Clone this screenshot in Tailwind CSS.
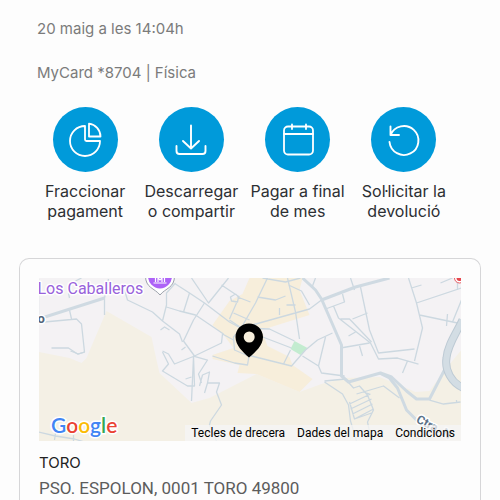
<!DOCTYPE html>
<html lang="ca">
<head>
<meta charset="utf-8">
<meta name="viewport" content="width=device-width, initial-scale=1">
<title>Detall del moviment</title>
<script src="https://cdn.jsdelivr.net/npm/@tailwindcss/browser@4"></script>
</head>
<body class="bg-[#fdfdfd] font-['Inter',sans-serif]">
<main class="flex min-h-screen flex-col pt-[17px]">
  <section class="flex flex-col gap-5 pl-[37px] text-[15px] leading-6 text-[#7b7b7b]">
    <p>20 maig a les 14:04h</p>
    <p>MyCard *8704 | Física</p>
  </section>

  <nav aria-label="Accions" class="mt-[22px] grid grid-cols-4 pr-[43px] pl-8 text-base leading-5 text-[#2c2f33]">
    <button type="button" class="flex flex-col items-center gap-[9px]">
      <span class="flex size-[65px] items-center justify-center rounded-full bg-[#009ada]">
        <svg class="size-9" viewBox="0 0 36 36" fill="none" stroke="#fff" stroke-width="1.8" stroke-linejoin="round" aria-hidden="true"><path d="M18 4A15 15 0 1 0 33 19H19.500Q18 19 18 17.500Z"/><path d="M22 1.700V14.500H33.500A13 13 0 0 0 22 1.700Z"/></svg>
      </span>
      <span>Fraccionar<br>pagament</span>
    </button>
    <button type="button" class="flex flex-col items-center gap-[9px]">
      <span class="flex size-[65px] items-center justify-center rounded-full bg-[#009ada]">
        <svg class="size-9" viewBox="0 0 36 36" fill="none" stroke="#fff" stroke-width="1.900" stroke-linecap="round" stroke-linejoin="round" aria-hidden="true"><path d="M18 3.500V26M10 19L18 26.500L26 19M3.500 24V29Q3.500 32 6.500 32H29.500Q32.500 32 32.500 29V24"/></svg>
      </span>
      <span>Descarregar<br>o compartir</span>
    </button>
    <button type="button" class="flex flex-col items-center gap-[9px]">
      <span class="flex size-[65px] items-center justify-center rounded-full bg-[#009ada]">
        <svg class="size-9" viewBox="0 0 36 36" fill="none" stroke="#fff" stroke-width="1.800" stroke-linecap="round" aria-hidden="true"><rect x="4" y="4.500" width="29" height="28" rx="4"/><path d="M4 12H33M12 2.500V7M26 2.500V7"/></svg>
      </span>
      <span>Pagar a final<br>de mes</span>
    </button>
    <button type="button" class="flex flex-col items-center gap-[9px]">
      <span class="flex size-[65px] items-center justify-center rounded-full bg-[#009ada]">
        <svg class="size-9" viewBox="0 0 36 36" fill="none" stroke="#fff" stroke-width="1.900" stroke-linecap="round" stroke-linejoin="round" aria-hidden="true"><path d="M4.500 4.500V13H13M4.500 13A14.500 14.500 0 1 1 3.500 20"/></svg>
      </span>
      <span>Sol·licitar la<br>devolució</span>
    </button>
  </nav>

  <section class="mx-[19px] mt-[37px] flex-1 rounded-t-[10px] border border-b-0 border-[#d6d6d8] px-[19px] pt-[19px]">
    <div class="relative h-[163px] overflow-hidden bg-[#f4f2f4]">
      <svg class="absolute inset-0 size-full" viewBox="39 278 423 163" preserveAspectRatio="xMidYMid slice" role="img" aria-label="Mapa de Toro">
        <g fill="#f4f0e5">
          <path d="M39 352L70 358L82 363L87 358L107 311L152 337L157 360L160 373L192 403L210 398L257 374L300 392L322 384L345 378L380 377L402 386L416 392L430 391L447 368L462 350V441H39Z"/>
        </g>
        <g fill="#f7eedb">
          <path d="M250 278H303L300 290L310 315L262 330L268 346L290 357L293 365L313 379L300 392L257 374L238 373L240 365L213 359V355L234 348L225 336L213 325L230 301L243 294Z"/>
        </g>
        <path d="M295 341L308 348L301 355L291 349Z" fill="#c3ecd0"/>
        <g fill="none" stroke="#ccd8e0" stroke-width="1.300" stroke-linejoin="round">
          <path d="M39 279V318M70 310L72 319M45 322L77 319L82 324L85 352L78 354L69 348H52M105 298V315M109 279L105 298M69 293L70 298M76 281L82 278"/>
          <path d="M125 290L128 300L153 312L163 321L180 334L183 342M163 321L167 305V293L176 283M167 307L180 311L196 315L224 334M161 330L165 327L170 330M176 284L190 293L184 312M190 293L205 303L230 322L241 328M192 278L209 303L229 278M222 285L240 297M236 294L231 297L232 301L238 302L239 297L236 294M238 297L251 302M237 303L230 319M234 313L250 320"/>
          <path d="M205 303L194 320L184 341L195 356M195 356L222 343L223 334M182 350L186 347"/>
          <path d="M268 278L256 303L241 329L234 337L235 350L249 356M230 320L242 328L310 309L322 300M263 278L286 282L301 278M288 278L296 312L300 339M289 285L302 291L310 305M258 297L276 300L286 296M280 308V315M287 305H296M242 328L270 329L295 341M258 335L292 348M313 286L316 278M223 334L234 340"/>
          <path d="M213 356L235 363L248 365L250 353M248 355L292 366L306 350L318 340L333 333M284 364L291 350M303 356L319 366L322 373L345 376M319 366L326 337"/>
          <path d="M351 278L355 290M361 287L370 330L379 353L415 349M343 294L345 302L326 309M334 306L339 318L371 343L379 359L398 358L419 364M341 319L350 319L372 342M353 319L368 313M349 336L356 332M341 348L370 343M360 346L363 356M408 361L403 373"/>
          <path d="M409 278L417 303L423 328L415 361M412 288L422 285M441 283L453 278M417 303L462 288M420 315L458 323M447 326L448 314M453 322L462 300M458 280V290"/>
          <path d="M163 351L169 354L175 364L195 356M163 352L169 364L163 371L188 386L195 386L194 356L208 360L199 374L202 383M200 386L203 375L210 372L208 383L205 393M208 383H220L217 392L222 405L211 421L210 425L217 441M192 401L194 357M186 379L192 377M71 351L79 354L85 352"/>
          <path d="M350 404L371 394M351 409L372 399M353 414L373 404M355 419L374 409M350 402L355 419L372 413M325 381L346 379L354 388L360 386L368 395L374 410L368 422L372 441M357 394L384 386L400 398M325 382L343 394L349 405L351 421L357 441M364 392L370 394M430 400L444 404L461 402M457 400V403"/>
          <path d="M39 432L56 436L75 439L85 442M56 433L55 440M74 435V442"/>
        </g>
        <g fill="none" stroke="#cfdae2" stroke-width="3" stroke-linejoin="round">
          <path d="M39 319L105 298M303 278L316 290L322 299L342 345V376L349 382L381 373L392 377L407 391L417 399H430L447 366"/>
          <path d="M322 300L356 287L390 278M380 373L390 378L398 388L407 410L418 421"/>
        </g>
        <path d="M463 320C457 333 448 345 447 358C445 370 452 383 464 388" fill="none" stroke="#bdcad4" stroke-width="8"/>
        <path d="M463 320C457 333 448 345 447 358C445 370 452 383 464 388" fill="none" stroke="#d3dde4" stroke-width="6"/>
        <g font-family="Roboto, sans-serif" stroke="#fff" stroke-width="3" stroke-linejoin="round" paint-order="stroke">
          <text x="38" y="294" font-size="16" fill="#9862db">Los Caballeros</text>
          <text x="38" y="323" font-size="13" font-weight="700" fill="#536479">o</text>
          <text x="416" y="422" font-size="12" font-weight="700" fill="#5b7187" transform="rotate(27 416 422)">Ctra. N</text>
        </g>
        <path d="M146 276C146 288 155 288 160.500 295C166 288 175 288 175 276Z" fill="#fff" stroke="#9ba1aa" stroke-width="1"/>
        <path d="M148.500 276A12 12.500 0 0 0 172.500 276Z" fill="#ad62f7"/>
        <path d="M156 277V282M165 277V282M154 283H167M158.500 282V278L160.500 280L162.500 278V282" fill="none" stroke="#fff" stroke-width="1.200"/>
        <circle cx="460" cy="278" r="5" fill="#fff" stroke="#e65b62"/>
        <circle cx="460" cy="278" r="3" fill="#e6474e"/>
        <path d="M249.500 323.500C242 323.500 236 329.300 236 337C236 345.500 243.500 352 249.500 357.500C256 352 263.500 345.500 263.500 337C263.500 329.300 257 323.500 249.500 323.500Z"/>
        <circle cx="249.700" cy="337" r="5.500" fill="#f7eedb"/>
      </svg>
      <a href="#mapa" aria-label="Google" class="absolute bottom-0 left-3 font-['Lato',sans-serif] text-[21px] leading-8 font-semibold [-webkit-text-stroke:3px_white] [paint-order:stroke_fill]"><span class="text-[#4285f4]">G</span><span class="text-[#ea4335]">o</span><span class="text-[#fbbc05]">o</span><span class="text-[#4285f4]">g</span><span class="text-[#34a853]">l</span><span class="text-[#ea4335]">e</span></a>
      <div class="absolute right-0 bottom-0 flex font-['Roboto',sans-serif] text-xs leading-4 text-black">
        <button type="button" class="bg-[#f5f5f5]/75 px-[6px]">Tecles de drecera</button>
        <button type="button" class="bg-[#f5f5f5]/75 px-[6px]">Dades del mapa</button>
        <a href="#condicions" class="bg-[#f5f5f5]/75 px-[6px]">Condicions</a>
      </div>
    </div>
    <h2 class="mt-[10px] text-[15px] leading-6 text-[#222]">TORO</h2>
    <p class="mt-px font-['Roboto',sans-serif] text-[17px] leading-6 text-[#5c5c5c]">PSO. ESPOLON, 0001 TORO 49800</p>
  </section>
</main>
</body>
</html>
